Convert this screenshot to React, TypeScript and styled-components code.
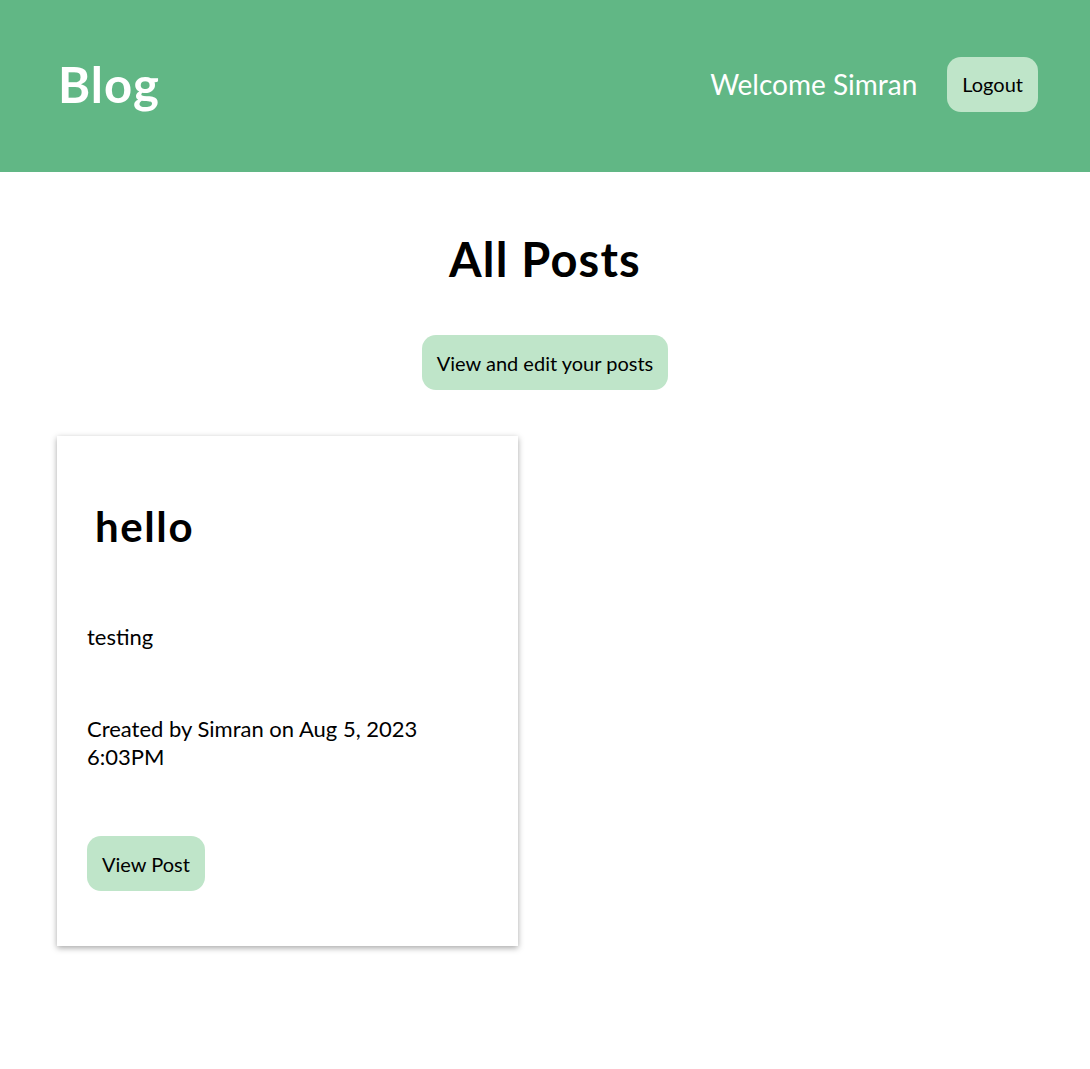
import React from "react";
import styled, { createGlobalStyle } from "styled-components";

const Global = createGlobalStyle`
  html, body { margin: 0; padding: 0; background: #ffffff; }
  body { font-family: "Lato", "Open Sans", sans-serif; color: #000; }
  * { box-sizing: border-box; }
`;

const Header = styled.header`
  height: 172px;
  background: #61b785;
  display: flex;
  align-items: center;
  justify-content: space-between;
  padding: 0 52px 4px 58px;
`;

const Brand = styled.h1`
  margin: 0;
  color: #ffffff;
  font-size: 49px;
  font-weight: 700;
  letter-spacing: 1px;
`;

const HeaderRight = styled.div`
  display: flex;
  align-items: center;
  gap: 30px;
`;

const Welcome = styled.span`
  color: #ffffff;
  font-size: 28px;
  font-weight: 400;
`;

const PillButton = styled.button<{ $size?: number }>`
  border: none;
  background: #bfe5c9;
  color: #000;
  border-radius: 14px;
  height: 55px;
  padding: 0 15px;
  font-family: inherit;
  font-size: ${(p) => p.$size ?? 20}px;
  cursor: pointer;
`;

const Main = styled.main`
  display: flex;
  flex-direction: column;
  align-items: center;
  padding: 59px 0 120px;
`;

const Title = styled.h2`
  margin: 0 0 48px;
  font-size: 47px;
  font-weight: 700;
  line-height: 56px;
  letter-spacing: 1.2px;
`;

const Grid = styled.section`
  align-self: stretch;
  display: grid;
  grid-template-columns: 461px;
  padding: 46px 57px 0;
`;

const Card = styled.article`
  background: #fff;
  box-shadow: 0 2px 6px rgba(0, 0, 0, 0.35);
  height: 510px;
  padding: 60px 30px 0;
  display: flex;
  flex-direction: column;
  align-items: flex-start;
`;

const CardTitle = styled.h3`
  margin: 0 0 0 8px;
  font-size: 42px;
  font-weight: 700;
  line-height: 60px;
  letter-spacing: 1.6px;
`;

const Text = styled.p`
  margin: 0;
  font-size: 22px;
  line-height: 28px;
`;

const Body = styled(Text)`
  margin-top: 67px;
`;

const Meta = styled(Text)`
  margin-top: 64px;
  max-width: 350px;
`;

const CardAction = styled.div`
  margin-top: 65px;
`;

export default function App() {
  return (
    <>
      <Global />
      <Header>
        <Brand>Blog</Brand>
        <HeaderRight>
          <Welcome>Welcome Simran</Welcome>
          <PillButton>Logout</PillButton>
        </HeaderRight>
      </Header>
      <Main>
        <Title>All Posts</Title>
        <PillButton>View and edit your posts</PillButton>
        <Grid>
          <Card>
            <CardTitle>hello</CardTitle>
            <Body>testing</Body>
            <Meta>Created by Simran on Aug 5, 2023 6:03PM</Meta>
            <CardAction>
              <PillButton>View Post</PillButton>
            </CardAction>
          </Card>
        </Grid>
      </Main>
    </>
  );
}
